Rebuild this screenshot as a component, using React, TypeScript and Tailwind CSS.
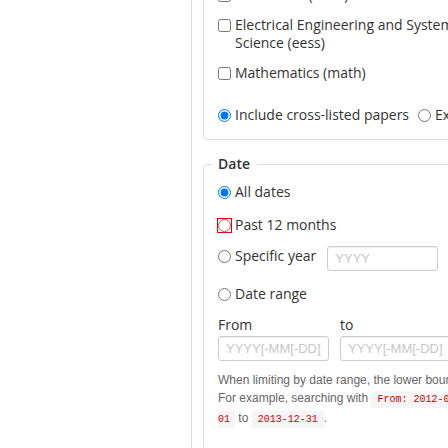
import React from 'react';

const label = "text-[14px] leading-[18px] text-[#333]";
const codeCls = "bg-[#f5f5f5] text-[#c00] text-[10px] font-['Liberation_Mono',monospace] py-[3px]";

const Check: React.FC<{ text: React.ReactNode }> = ({ text }) => (
  <label className="flex items-start gap-[4px]">
    <input type="checkbox" className="m-0 mt-[3px] w-[13px] h-[13px] shrink-0" />
    <span className={label}>{text}</span>
  </label>
);

const Radio: React.FC<{ text: string; checked?: boolean; marked?: boolean; name: string }> = ({ text, checked, marked, name }) => (
  <label className="flex items-center gap-[4px]">
    <input
      type="radio"
      name={name}
      defaultChecked={checked}
      className={marked ? "m-0 w-[13px] h-[13px] shrink-0 outline-1 outline-[#e00]" : "m-0 w-[13px] h-[13px] shrink-0"}
    />
    <span className={label + " whitespace-nowrap"}>{text}</span>
  </label>
);

const TextInput: React.FC<{ placeholder: string }> = ({ placeholder }) => (
  <input
    type="text"
    placeholder={placeholder}
    className="w-[111px] h-[25px] px-[7px] border border-[#ccc] rounded-[3px] shadow-[inset_0_1px_1px_rgba(0,0,0,0.06)] text-[13px] font-['Liberation_Sans',Arial,sans-serif] placeholder:text-[#c8c8c8] bg-white"
  />
);

export default function App() {
  return (
    <div className="w-[448px] h-[448px] overflow-hidden bg-white font-['Open_Sans',sans-serif]">
      <div className="flex h-full">
        <div className="w-[191px] shrink-0" />
        <div className="w-[600px] shrink-0 h-full border-l border-[#ddd] pl-[11px]">
          {/* subject fieldset, top is scrolled out of view */}
          <fieldset className="-mt-[40px] border border-[#ddd] rounded-[4px] pt-[25px] pb-[15px] pl-[14px]">
            <div className="flex flex-col gap-[12px]">
              <Check text="Economics (econ)" />
              <Check text={<>Electrical Engineering and Systems<br />Science (eess)</>} />
              <Check text="Mathematics (math)" />
            </div>
            <div className="flex items-center gap-[9px] mt-[24px]">
              <Radio name="cross" text="Include cross-listed papers" checked />
              <Radio name="cross" text="Exclude cross-listed papers" />
            </div>
          </fieldset>

          {/* date fieldset */}
          <fieldset className="mt-[14px] border border-[#ddd] rounded-[4px] pt-[9px] pb-[20px] pl-[14px]">
            <legend className="-ml-[7px] px-[7px] text-[14px] leading-[20px] font-semibold text-[#333]">Date</legend>
            <Radio name="date" text="All dates" checked />
            <div className="mt-[15px]">
              <Radio name="date" text="Past 12 months" marked />
            </div>
            <div className="mt-[12px] flex items-start gap-[11px]">
              <div className="mt-[1px]">
                <Radio name="date" text="Specific year" />
              </div>
              <TextInput placeholder="YYYY" />
            </div>
            <div className="mt-[14px]">
              <Radio name="date" text="Date range" />
            </div>
            <div className="mt-[13px] grid grid-cols-[111px_111px] gap-x-[11px] gap-y-[2px]">
              <span className={label}>From</span>
              <span className={label}>to</span>
              <TextInput placeholder="YYYY[-MM[-DD]]" />
              <TextInput placeholder="YYYY[-MM[-DD]]" />
            </div>
            <p className="mt-[10px] text-[12px] leading-[18px] text-[#666] font-['Liberation_Sans',Arial,sans-serif] whitespace-nowrap">
              When limiting by date range, the lower bound of the "from" date and the upper bound of the "to" date are used.
              <br />
              For example, searching with <code className={codeCls + " px-[6px]"}>From: 2012-02</code> and{' '}
              <code className={codeCls + " px-[6px]"}>To: 2013</code> will search for papers submitted from{' '}
              <code className={codeCls + " pl-[6px]"}>2012-02-</code>
              <br />
              <code className={codeCls + " pr-[5px]"}>01</code> to <code className={codeCls + " px-[6px]"}>2013-12-31</code>.
            </p>
          </fieldset>
        </div>
      </div>
    </div>
  );
}
